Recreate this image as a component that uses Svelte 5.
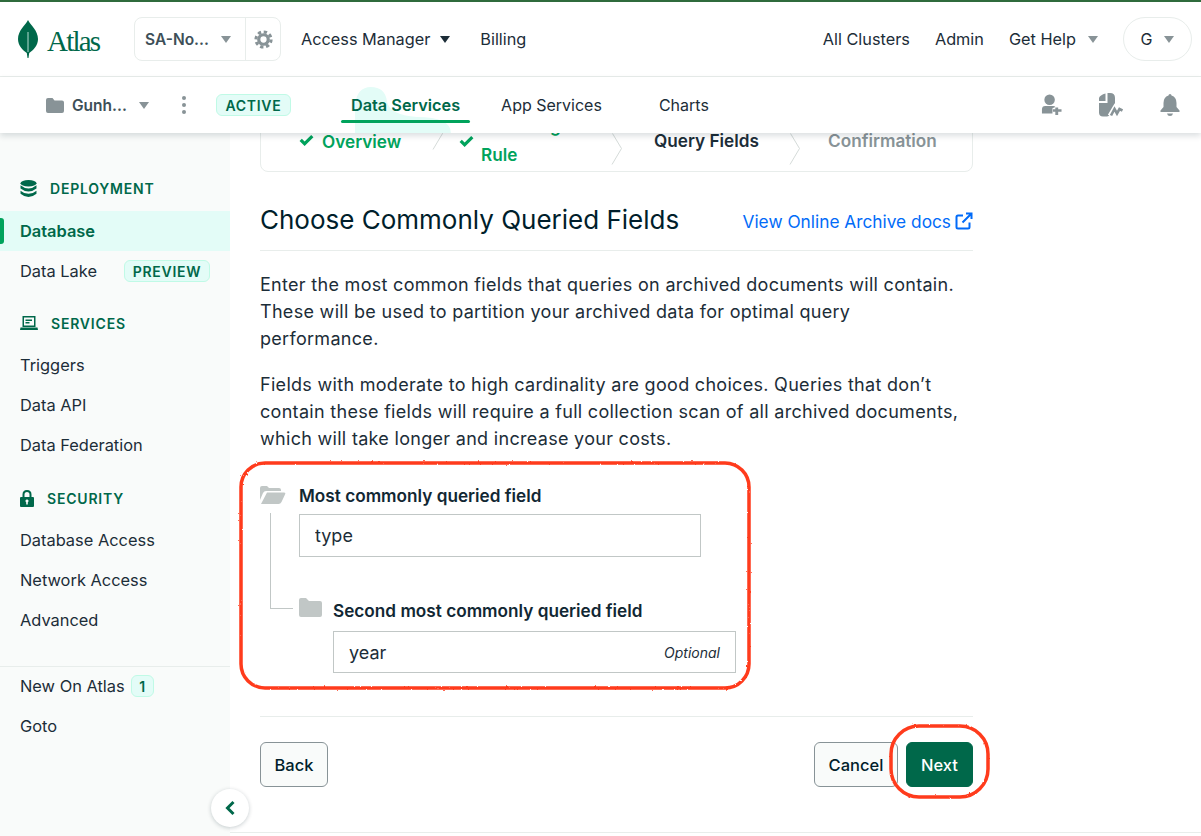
<script lang="ts">
  const topRight = ['All Clusters', 'Admin'];

  const services = ['Triggers', 'Data API', 'Data Federation'];
  const security = ['Database Access', 'Network Access', 'Advanced'];
</script>

{#snippet chevron()}
  <svg class="step-sep" viewBox="0 0 12 32" fill="none" stroke="#d5dbd9" stroke-width="1">
    <path d="M1.5 0.5 L10.5 15.5 L1 31.5" />
  </svg>
{/snippet}

{#snippet check()}
  <svg class="step-check" viewBox="0 0 16 13" fill="#00a35c">
    <path d="M0.6 7 L3 4.6 L6 7.6 L13 0.6 L15.4 3 L6 12.4 Z" />
  </svg>
{/snippet}

<div class="page">
  <div class="topline"></div>

  <header class="topbar">
    <div class="brand">
      <svg class="leaf" viewBox="0 0 20 38">
        <path fill="#00684a" d="M10 0 C7.5 5 0 10.5 0 19 C0 25.5 4.5 30 8.8 33 L9.5 38 L10.5 38 L11.2 33 C15.5 30 20 25.5 20 19 C20 10.5 12.5 5 10 0 Z" />
        <path stroke="#e3fcf7" stroke-width="0.8" fill="none" d="M10 12 L10 32" />
      </svg>
      <span class="wordmark">Atlas</span>
    </div>

    <div class="org">
      <div class="org-name">SA-No...<span class="tri"></span></div>
      <div class="org-gear">
        <svg viewBox="0 0 20 20" width="19" height="19" fill="none" stroke="#889397">
          <circle cx="10" cy="10" r="8" stroke-width="3.2" stroke-dasharray="3.5 2.78" />
          <circle cx="10" cy="10" r="5" stroke-width="3.4" />
        </svg>
      </div>
    </div>

    <nav class="topnav">
      <span>Access Manager</span><span class="tri dark"></span>
      <span class="billing">Billing</span>
    </nav>

    <nav class="topnav right">
      {#each topRight as item}
        <span>{item}</span>
      {/each}
      <span>Get Help</span><span class="tri help"></span>
    </nav>

    <div class="user">G<span class="tri"></span></div>
  </header>

  <div class="subnav">
    <svg class="folder" viewBox="0 0 18 15" fill="#889397">
      <path d="M0 2 Q0 0 2 0 L6.5 0 L8.5 2.5 L16 2.5 Q18 2.5 18 4.5 L18 13 Q18 15 16 15 L2 15 Q0 15 0 13 Z" />
    </svg>
    <span class="project">Gunh...</span><span class="tri"></span>
    <svg class="dots" viewBox="0 0 4 18" fill="#889397">
      <circle cx="2" cy="2" r="2" /><circle cx="2" cy="9" r="2" /><circle cx="2" cy="16" r="2" />
    </svg>
    <span class="badge active">ACTIVE</span>

    <div class="tabs">
      <span class="tab current"><i class="blob"></i><b>Data Services</b></span>
      <span class="tab">App Services</span>
      <span class="tab charts">Charts</span>
    </div>

    <div class="tools">
      <svg viewBox="0 0 22 22" width="21" height="22" fill="#889397">
        <circle cx="9" cy="5.5" r="5.5" />
        <path d="M1 20 L1 15.5 Q1 12 4.5 12 L13 12 Q14.5 12 15 13 L12 14.5 L12 20 Z" />
        <path d="M15 13.5 L18 13.5 L18 15.5 L21.5 15.5 L21.5 18 L18 18 L18 21.5 L15 21.5 L15 18 L12.5 18 L12.5 15.5 L15 15.5 Z" />
      </svg>
      <svg viewBox="0 0 24 24" width="24" height="24" fill="#889397">
        <path d="M0 8 L0 5 Q1 2 6.5 0.5 L6.5 8 Z" />
        <path d="M8.5 0 L11 0 Q16 0 16 5 L16 12.5 L11 21.5 Q10 23.5 8 23.5 L4 23.5 Q0 23.5 0 19.5 L0 10 L8.5 10 Z" />
        <path d="M11 23 L15.5 15.5 L18 20.5 L20.5 16 L23.5 17.5" fill="none" stroke="#fff" stroke-width="5" />
        <path d="M12 22.5 L15.5 16 L18 20.5 L20.5 16 L23.5 17.5" fill="none" stroke="#889397" stroke-width="2.6" />
      </svg>
      <svg viewBox="0 0 20 22" width="20" height="22" fill="#889397">
        <path d="M10 0 Q11.5 0 11.5 1.5 Q16.5 3 16.5 9 L16.5 13 L19.5 16.5 L19.5 18 L0.5 18 L0.5 16.5 L3.5 13 L3.5 9 Q3.5 3 8.5 1.5 Q8.5 0 10 0 Z" />
        <path d="M7 19.5 L13 19.5 Q12.5 22 10 22 Q7.5 22 7 19.5 Z" />
      </svg>
    </div>
  </div>

  <div class="body">
    <aside class="sidebar">
      <h4 class="section lead">
        <svg viewBox="0 0 16 16" width="17" height="17" fill="#00684a">
          <ellipse cx="8" cy="3" rx="7.5" ry="3" />
          <path d="M0.5 5 Q4 8 8 8 Q12 8 15.5 5 L15.5 8 Q12 10.8 8 10.8 Q4 10.8 0.5 8 Z" />
          <path d="M0.5 10 Q4 13 8 13 Q12 13 15.5 10 L15.5 13 Q12 16 8 16 Q4 16 0.5 13 Z" />
        </svg>
        DEPLOYMENT
      </h4>
      <div class="row selected">Database</div>
      <div class="row">Data Lake <span class="badge preview">PREVIEW</span></div>

      <h4 class="section">
        <svg viewBox="0 0 18 16" width="18" height="16" fill="#00684a">
          <path fill-rule="evenodd" d="M2.5 1 L15.5 1 L15.5 12 L2.5 12 Z M4 2.5 L4 10.5 L14 10.5 L14 2.5 Z" />
          <path d="M5.5 4.5 H12 V6 H5.5 Z M5.5 7 H9.5 V8.5 H5.5 Z M0.5 12.5 H17.5 L18 15 H0 Z" />
        </svg>
        SERVICES
      </h4>
      {#each services as item}
        <div class="row">{item}</div>
      {/each}

      <h4 class="section sec">
        <svg viewBox="0 0 14 17" width="14" height="17" fill="#00684a">
          <path fill-rule="evenodd" d="M7 0 Q11.5 0 11.5 4.5 L11.5 7 L13 7 Q14 7 14 8 L14 16 Q14 17 13 17 L1 17 Q0 17 0 16 L0 8 Q0 7 1 7 L2.5 7 L2.5 4.5 Q2.5 0 7 0 Z M4.5 7 L9.5 7 L9.5 4.5 Q9.5 2 7 2 Q4.5 2 4.5 4.5 Z M7 9.5 A1.5 1.5 0 0 0 6.2 12.3 L6.2 14.5 L7.8 14.5 L7.8 12.3 A1.5 1.5 0 0 0 7 9.5 Z" />
        </svg>
        SECURITY
      </h4>
      {#each security as item}
        <div class="row">{item}</div>
      {/each}

      <div class="side-rule"></div>
      <div class="row">New On Atlas <span class="count">1</span></div>
      <div class="row">Goto</div>
    </aside>

    <button class="collapse" aria-label="Collapse sidebar">
      <svg viewBox="0 0 12 16" width="12" height="16" fill="none" stroke="#00684a" stroke-width="3">
        <path d="M9.5 2 L3.5 8 L9.5 14" />
      </svg>
    </button>

    <main class="main">
      <div class="stepper">
        <div class="step done one">{@render check()}<span>Overview</span></div>
        <div class="sep first">{@render chevron()}</div>
        <div class="step done two">{@render check()}<span class="wrap">Archiving Rule</span></div>
        <div class="sep">{@render chevron()}</div>
        <div class="step now">Query Fields</div>
        <div class="sep">{@render chevron()}</div>
        <div class="step later">Confirmation</div>
      </div>

      <div class="heading">
        <h2>Choose Commonly Queried Fields</h2>
        <a class="docs" href="#docs">View Online Archive docs
          <svg viewBox="0 0 18 18" width="18" height="18" fill="none" stroke="#016bf8" stroke-width="2">
            <path d="M8 3.5 L3 3.5 Q1.5 3.5 1.5 5 L1.5 15 Q1.5 16.5 3 16.5 L13 16.5 Q14.5 16.5 14.5 15 L14.5 10.5" />
            <path d="M7.5 10.5 L16 2 M11 1.5 L16.5 1.5 L16.5 7" />
          </svg>
        </a>
      </div>

      <p class="first-p">Enter the most common fields that queries on archived documents will contain. These will be used to partition your archived data for optimal query performance.</p>
      <p>Fields with moderate to high cardinality are good choices. Queries that don’t contain these fields will require a full collection scan of all archived documents, which will take longer and increase your costs.</p>

      <div class="tree">
        <div class="label">
          <svg class="label-icon" viewBox="0 0 26 18" width="26" height="18" fill="#c1c7c6">
            <path d="M0 14 L0 2 Q0 0 2 0 L7 0 L9 2 L19 2 Q21 2 21 4 L21 5 L6 5 Q4 5 3 7 Z" />
            <path d="M7 6.5 L24 6.5 Q26 6.5 25 8.5 L21.5 16 Q20.5 18 18.5 18 L1 18 Z" />
          </svg>
          Most commonly queried field
        </div>
        <div class="input first-input"><input value="type" aria-label="Most commonly queried field" /></div>

        <div class="label second">
          <svg class="label-icon" viewBox="0 0 23 19" width="23" height="19" fill="#c1c7c6">
            <path d="M0 2 Q0 0 2 0 L7 0 L10 3 L21 3 Q23 3 23 5 L23 17 Q23 19 21 19 L2 19 Q0 19 0 17 Z" />
          </svg>
          Second most commonly queried field
        </div>
        <div class="input second-input">
          <input value="year" aria-label="Second most commonly queried field" />
          <em>Optional</em>
        </div>
      </div>

      <div class="footer">
        <button class="btn back">Back</button>
        <button class="btn cancel">Cancel</button>
        <button class="btn next">Next</button>
      </div>
    </main>
  </div>

  <!-- hand-drawn review marks on top of the screenshot -->
  <svg class="marks" viewBox="0 0 1201 836" fill="none" stroke="#ff3b1c" stroke-width="3.5">
    <filter id="rough" x="-5%" y="-5%" width="110%" height="110%">
      <feTurbulence type="fractalNoise" baseFrequency="0.35" numOctaves="2" seed="3" />
      <feDisplacementMap in="SourceGraphic" scale="2" />
    </filter>
    <rect filter="url(#rough)" x="241" y="463" width="508" height="225" rx="24" />
    <rect filter="url(#rough)" x="891" y="726" width="97" height="71" rx="28" />
  </svg>
</div>

<style>
  :global(body) {
    margin: 0;
    background: #fff;
  }

  .page {
    position: relative;
    width: 1201px;
    height: 836px;
    overflow: hidden;
    display: flex;
    flex-direction: column;
    font-family: Inter, "Liberation Sans", sans-serif;
    font-size: 16px;
    color: #001e2b;
  }

  .topline {
    height: 2px;
    background: #2f6b3c;
    flex: none;
  }

  /* small dropdown triangle */
  .tri {
    display: inline-block;
    width: 0;
    height: 0;
    border-left: 5.5px solid transparent;
    border-right: 5.5px solid transparent;
    border-top: 7px solid #889397;
  }
  .tri.dark { border-top-color: #1c2d38; }

  .topbar {
    height: 74px;
    flex: none;
    display: flex;
    align-items: center;
    border-bottom: 1px solid #e8edeb;
    box-sizing: content-box;
    background: #fff;
  }

  .brand {
    display: flex;
    align-items: center;
    width: 134px;
    flex: none;
    padding-left: 18px;
    box-sizing: border-box;
  }
  .leaf { width: 20px; height: 38px; flex: none; }
  .wordmark {
    margin-left: 9px;
    font-family: "Liberation Serif", serif;
    font-size: 29px;
    letter-spacing: -1.8px;
    color: #00684a;
    margin-top: 4px;
  }

  .org {
    display: flex;
    width: 147px;
    height: 44px;
    flex: none;
    border: 1px solid #e8edeb;
    border-radius: 8px;
    box-sizing: border-box;
  }
  .org-name {
    width: 111px;
    flex: none;
    box-sizing: border-box;
    display: flex;
    align-items: center;
    justify-content: space-between;
    padding: 0 14px 0 10px;
    border-right: 1px solid #e8edeb;
    font-weight: 600;
    font-size: 15.5px;
    white-space: nowrap;
    color: #3d4f58;
  }
  .org-gear {
    flex: 1;
    display: flex;
    align-items: center;
    justify-content: center;
  }

  .topnav {
    display: flex;
    align-items: center;
    margin-left: 20px;
    font-size: 16.3px;
    color: #1c2d38;
  }
  .topnav .tri { margin-left: 10px; }
  .billing { margin-left: 30px; }

  .topnav.right {
    margin-left: auto;
    gap: 25px;
  }
  .topnav.right .tri.help { margin-left: -13px; }

  .user {
    width: 69px;
    height: 44px;
    margin: 0 9px 0 25px;
    flex: none;
    box-sizing: border-box;
    border: 1px solid #e8edeb;
    border-radius: 22px;
    display: flex;
    align-items: center;
    justify-content: center;
    gap: 12px;
    color: #1c2d38;
  }

  .subnav {
    position: relative;
    z-index: 2;
    height: 56px;
    flex: none;
    display: flex;
    align-items: center;
    padding-left: 46px;
    background: #fff;
    box-shadow: 0 3px 6px rgba(0, 30, 43, 0.14);
  }
  .folder { width: 18px; height: 15px; flex: none; }
  .project {
    margin: 0 12px 0 8px;
    font-weight: 600;
    font-size: 15.5px;
    color: #3d4f58;
  }
  .dots { width: 4px; height: 18px; margin-left: 33px; flex: none; }

  .badge {
    box-sizing: border-box;
    display: inline-flex;
    align-items: center;
    justify-content: center;
    background: #e3fcf7;
    border: 1px solid #c0fae6;
    border-radius: 6px;
    color: #00684a;
    font-weight: 600;
    letter-spacing: 0.7px;
  }
  .badge.active {
    width: 75px;
    height: 22px;
    margin-left: 30px;
    font-size: 14px;
  }

  .tabs {
    display: flex;
    align-items: center;
    margin-left: 60px;
    align-self: stretch;
  }
  .tab {
    position: relative;
    color: #1c2d38;
    margin-left: 41px;
  }
  .tab.current {
    margin-left: 0;
    color: #00684a;
    align-self: stretch;
    display: flex;
    align-items: center;
  }
  .tab.current b { position: relative; font-size: 16.3px; font-weight: 600; }
  .tab.current::after {
    content: "";
    position: absolute;
    left: -10px;
    right: -10px;
    bottom: 10px;
    height: 3px;
    border-radius: 2px;
    background: #00a35c;
  }
  .blob {
    position: absolute;
    left: 4px;
    top: 10px;
    width: 96px;
    height: 46px;
    background: #e3fcf7;
    clip-path: path("M0 46 L0 18 Q2 0 16 0 Q30 0 32 14 Q34 28 62 30 Q96 30 96 46 Z");
  }
  .tab.charts { margin-left: 57px; }

  .tools {
    margin-left: auto;
    margin-right: 21px;
    display: flex;
    align-items: center;
    gap: 37px;
  }

  .body {
    position: relative;
    flex: 1;
    display: flex;
    min-height: 0;
  }

  .sidebar {
    width: 230px;
    flex: none;
    padding-top: 23px;
    background: #f9fbfa;
    box-sizing: border-box;
  }
  .section {
    height: 20px;
    margin: 0;
    padding: 22px 0 12px 20px;
    display: flex;
    align-items: center;
    gap: 13px;
    color: #00684a;
    font-size: 14px;
    font-weight: 600;
    letter-spacing: 0.8px;
  }
  .section.lead { padding-bottom: 13px; }
  .section.sec { padding-top: 23px; }
  .row {
    height: 40px;
    display: flex;
    align-items: center;
    padding-left: 20px;
    font-size: 16.4px;
    color: #1c2d38;
  }
  .row.selected {
    position: relative;
    background: #e3fcf7;
    color: #00684a;
    font-weight: 600;
  }
  .row.selected::before {
    content: "";
    position: absolute;
    left: 0;
    top: 7px;
    bottom: 7px;
    width: 4px;
    border-radius: 0 3px 3px 0;
    background: #00a35c;
  }
  .badge.preview {
    width: 86px;
    height: 22px;
    margin-left: 27px;
    font-size: 14px;
  }
  .side-rule {
    height: 1px;
    margin: 26px 0 -1px;
    background: #e8edeb;
  }
  .count {
    box-sizing: border-box;
    width: 23px;
    height: 22px;
    margin-left: 6px;
    display: flex;
    align-items: center;
    justify-content: center;
    background: #e3fcf7;
    border: 1px solid #c0fae6;
    border-radius: 6px;
    color: #00684a;
    font-size: 14px;
    font-weight: 600;
  }

  .collapse {
    position: absolute;
    z-index: 1;
    left: 211px;
    bottom: 9px;
    width: 38px;
    height: 38px;
    padding: 0;
    display: flex;
    align-items: center;
    justify-content: center;
    background: #fff;
    border: none;
    border-radius: 50%;
    box-shadow: 0 1px 4px rgba(0, 30, 43, 0.22);
  }

  .main {
    flex: 1;
    min-width: 0;
    height: 700px;
    padding-left: 30px;
    padding-right: 228px;
    border-bottom: 1px solid #e8edeb;
    overflow: hidden;
    box-sizing: border-box;
  }

  /* the page is scrolled: the top of the stepper sits behind the nav */
  .stepper {
    box-sizing: border-box;
    height: 69px;
    margin-top: -30px;
    padding: 18px 0 0 38px;
    display: grid;
    grid-template-columns: 133px 27px 152px 43px 135px 39px 1fr;
    border: 1px solid #e8edeb;
    border-radius: 0 0 8px 8px;
    font-size: 17.2px;
    line-height: 22px;
    font-weight: 600;
  }
  .step { display: flex; align-items: flex-start; }
  .step.done { color: #00a35c; }
  .step.one { margin-top: 9px; }
  .step.two { margin-top: -11px; align-items: center; height: 58px; line-height: 29px; }
  .step.now { margin-top: 8px; color: #1c2d38; }
  .step.later { margin-top: 8px; color: #889397; }
  .step-check { width: 15px; height: 13px; flex: none; margin: 3px 8px 0 0; }
  .step.two .step-check { margin: 2px 7px 0 0; }
  .wrap { width: 90px; }
  .sep { margin-top: 11px; }
  .sep.first { margin-top: -4px; }
  .step-sep { width: 12px; height: 32px; display: block; }

  .heading {
    height: 62px;
    margin-top: 16px;
    display: flex;
    align-items: center;
    justify-content: space-between;
    border-bottom: 1px solid #e8edeb;
  }
  h2 {
    margin: 0;
    font-size: 26px;
    font-weight: 400;
    color: #001e2b;
  }
  .docs {
    display: flex;
    align-items: center;
    gap: 4px;
    margin-top: 4px;
    font-size: 17.3px;
    color: #016bf8;
    text-decoration: none;
  }

  p {
    margin: 19px 0 0;
    font-size: 18px;
    letter-spacing: 0.3px;
    line-height: 27px;
    max-width: 705px;
    color: #1c2d38;
  }
  p.first-p { margin-top: 20px; }

  .tree {
    position: relative;
    margin-top: 31px;
  }
  /* connector between the two field levels */
  .tree::before {
    content: "";
    position: absolute;
    left: 10px;
    top: 30px;
    width: 22px;
    height: 95px;
    border-left: 1px solid #c1c7c6;
    border-bottom: 1px solid #c1c7c6;
  }
  .label {
    display: flex;
    align-items: center;
    height: 24px;
    padding-left: 39px;
    font-size: 17.2px;
    font-weight: 600;
    color: #112733;
  }
  .label-icon {
    position: absolute;
    left: 0;
  }
  .label.second {
    position: relative;
    margin-top: 41px;
    padding-left: 73px;
  }
  .label.second .label-icon { left: 39px; top: 0; }

  .input {
    box-sizing: border-box;
    display: flex;
    align-items: center;
    border: 1px solid #c1c7c6;
    background: #fff;
  }
  .first-input {
    width: 402px;
    height: 43px;
    margin: 7px 0 0 39px;
  }
  .second-input {
    width: 403px;
    height: 42px;
    margin: 9px 0 0 73px;
  }
  input {
    flex: 1;
    min-width: 0;
    border: none;
    outline: none;
    padding: 0 15px;
    background: transparent;
    font: inherit;
    font-size: 18px;
    color: #1c2d38;
  }
  .input em {
    margin-right: 15px;
    font-size: 14px;
    color: #1c2d38;
  }

  .footer {
    margin-top: 43px;
    padding-top: 25px;
    display: flex;
    border-top: 1px solid #e8edeb;
  }
  .btn {
    height: 45px;
    padding: 0;
    border: 1px solid #889397;
    border-radius: 6px;
    background: #f9fbfa;
    font: inherit;
    font-size: 16.5px;
    font-weight: 500;
    color: #001e2b;
  }
  .btn.back { width: 68px; }
  .btn.cancel { width: 84px; margin-left: auto; }
  .btn.next {
    width: 67px;
    margin-left: 8px;
    border-color: #00684a;
    background: #00684a;
    color: #fff;
  }

  .marks {
    position: absolute;
    inset: 0;
    width: 1201px;
    height: 836px;
    z-index: 3;
    pointer-events: none;
  }
</style>
